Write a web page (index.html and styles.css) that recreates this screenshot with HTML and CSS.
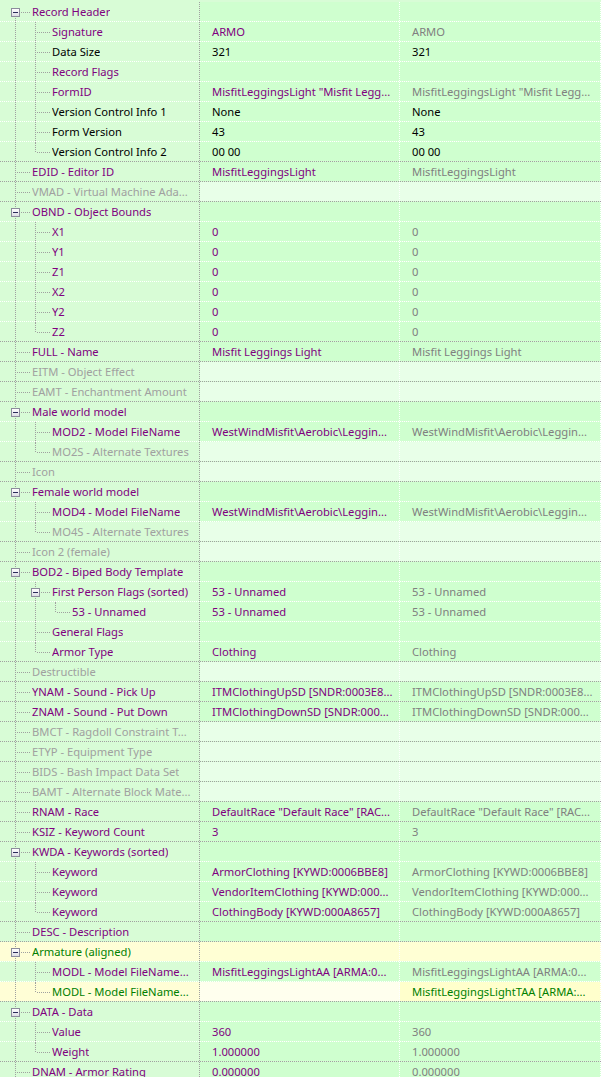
FILE: index.html
```html
<!DOCTYPE html>
<html>
<head>
<meta charset="utf-8">
<title>Record view</title>
<link rel="stylesheet" href="styles.css">
</head>
<body>
<div class="tree">
  <div class="row first"><div class="c name"><i class="g first"><b class="box"></b></i><span class="t">Record Header</span></div><div class="c val"></div><div class="c val v3"></div></div>
  <div class="row"><div class="c name"><i class="g pipe"></i><i class="g tee"></i><span class="t">Signature</span></div><div class="c val">ARMO</div><div class="c val v3">ARMO</div></div>
  <div class="row"><div class="c name bk"><i class="g pipe"></i><i class="g tee"></i><span class="t">Data Size</span></div><div class="c val bk">321</div><div class="c val v3 bk">321</div></div>
  <div class="row"><div class="c name"><i class="g pipe"></i><i class="g tee"></i><span class="t">Record Flags</span></div><div class="c val"></div><div class="c val v3"></div></div>
  <div class="row"><div class="c name"><i class="g pipe"></i><i class="g tee"></i><span class="t">FormID</span></div><div class="c val">MisfitLeggingsLight "Misfit Legg...</div><div class="c val v3">MisfitLeggingsLight "Misfit Legg...</div></div>
  <div class="row"><div class="c name bk"><i class="g pipe"></i><i class="g tee"></i><span class="t">Version Control Info 1</span></div><div class="c val bk">None</div><div class="c val v3 bk">None</div></div>
  <div class="row"><div class="c name bk"><i class="g pipe"></i><i class="g tee"></i><span class="t">Form Version</span></div><div class="c val bk">43</div><div class="c val v3 bk">43</div></div>
  <div class="row"><div class="c name bk"><i class="g pipe"></i><i class="g elbow"></i><span class="t">Version Control Info 2</span></div><div class="c val bk">00 00</div><div class="c val v3 bk">00 00</div></div>
  <div class="row l1"><div class="c name"><i class="g tee"></i><span class="t">EDID - Editor ID</span></div><div class="c val">MisfitLeggingsLight</div><div class="c val v3">MisfitLeggingsLight</div></div>
  <div class="row l1 off"><div class="c name dis"><i class="g tee"></i><span class="t">VMAD - Virtual Machine Ada...</span></div><div class="c val"></div><div class="c val v3"></div></div>
  <div class="row l1"><div class="c name"><i class="g tee"><b class="box"></b></i><span class="t">OBND - Object Bounds</span></div><div class="c val"></div><div class="c val v3"></div></div>
  <div class="row"><div class="c name"><i class="g pipe"></i><i class="g tee"></i><span class="t">X1</span></div><div class="c val">0</div><div class="c val v3">0</div></div>
  <div class="row"><div class="c name"><i class="g pipe"></i><i class="g tee"></i><span class="t">Y1</span></div><div class="c val">0</div><div class="c val v3">0</div></div>
  <div class="row"><div class="c name"><i class="g pipe"></i><i class="g tee"></i><span class="t">Z1</span></div><div class="c val">0</div><div class="c val v3">0</div></div>
  <div class="row"><div class="c name"><i class="g pipe"></i><i class="g tee"></i><span class="t">X2</span></div><div class="c val">0</div><div class="c val v3">0</div></div>
  <div class="row"><div class="c name"><i class="g pipe"></i><i class="g tee"></i><span class="t">Y2</span></div><div class="c val">0</div><div class="c val v3">0</div></div>
  <div class="row"><div class="c name"><i class="g pipe"></i><i class="g elbow"></i><span class="t">Z2</span></div><div class="c val">0</div><div class="c val v3">0</div></div>
  <div class="row l1"><div class="c name"><i class="g tee"></i><span class="t">FULL - Name</span></div><div class="c val">Misfit Leggings Light</div><div class="c val v3">Misfit Leggings Light</div></div>
  <div class="row l1 off"><div class="c name dis"><i class="g tee"></i><span class="t">EITM - Object Effect</span></div><div class="c val"></div><div class="c val v3"></div></div>
  <div class="row l1 off"><div class="c name dis"><i class="g tee"></i><span class="t">EAMT - Enchantment Amount</span></div><div class="c val"></div><div class="c val v3"></div></div>
  <div class="row l1"><div class="c name"><i class="g tee"><b class="box"></b></i><span class="t">Male world model</span></div><div class="c val"></div><div class="c val v3"></div></div>
  <div class="row"><div class="c name"><i class="g pipe"></i><i class="g tee"></i><span class="t">MOD2 - Model FileName</span></div><div class="c val">WestWindMisfit\Aerobic\Leggin...</div><div class="c val v3">WestWindMisfit\Aerobic\Leggin...</div></div>
  <div class="row off"><div class="c name dis"><i class="g pipe"></i><i class="g elbow"></i><span class="t">MO2S - Alternate Textures</span></div><div class="c val"></div><div class="c val v3"></div></div>
  <div class="row l1 off"><div class="c name dis"><i class="g tee"></i><span class="t">Icon</span></div><div class="c val"></div><div class="c val v3"></div></div>
  <div class="row l1"><div class="c name"><i class="g tee"><b class="box"></b></i><span class="t">Female world model</span></div><div class="c val"></div><div class="c val v3"></div></div>
  <div class="row"><div class="c name"><i class="g pipe"></i><i class="g tee"></i><span class="t">MOD4 - Model FileName</span></div><div class="c val">WestWindMisfit\Aerobic\Leggin...</div><div class="c val v3">WestWindMisfit\Aerobic\Leggin...</div></div>
  <div class="row off"><div class="c name dis"><i class="g pipe"></i><i class="g elbow"></i><span class="t">MO4S - Alternate Textures</span></div><div class="c val"></div><div class="c val v3"></div></div>
  <div class="row l1 off"><div class="c name dis"><i class="g tee"></i><span class="t">Icon 2 (female)</span></div><div class="c val"></div><div class="c val v3"></div></div>
  <div class="row l1"><div class="c name"><i class="g tee"><b class="box"></b></i><span class="t">BOD2 - Biped Body Template</span></div><div class="c val"></div><div class="c val v3"></div></div>
  <div class="row"><div class="c name"><i class="g pipe"></i><i class="g tee"><b class="box"></b></i><span class="t">First Person Flags (sorted)</span></div><div class="c val">53 - Unnamed</div><div class="c val v3">53 - Unnamed</div></div>
  <div class="row"><div class="c name"><i class="g pipe"></i><i class="g pipe"></i><i class="g elbow"></i><span class="t">53 - Unnamed</span></div><div class="c val">53 - Unnamed</div><div class="c val v3">53 - Unnamed</div></div>
  <div class="row"><div class="c name"><i class="g pipe"></i><i class="g tee"></i><span class="t">General Flags</span></div><div class="c val"></div><div class="c val v3"></div></div>
  <div class="row"><div class="c name"><i class="g pipe"></i><i class="g elbow"></i><span class="t">Armor Type</span></div><div class="c val">Clothing</div><div class="c val v3">Clothing</div></div>
  <div class="row l1 off"><div class="c name dis"><i class="g tee"></i><span class="t">Destructible</span></div><div class="c val"></div><div class="c val v3"></div></div>
  <div class="row l1"><div class="c name"><i class="g tee"></i><span class="t">YNAM - Sound - Pick Up</span></div><div class="c val">ITMClothingUpSD [SNDR:0003E8...</div><div class="c val v3">ITMClothingUpSD [SNDR:0003E8...</div></div>
  <div class="row l1"><div class="c name"><i class="g tee"></i><span class="t">ZNAM - Sound - Put Down</span></div><div class="c val">ITMClothingDownSD [SNDR:000...</div><div class="c val v3">ITMClothingDownSD [SNDR:000...</div></div>
  <div class="row l1 off"><div class="c name dis"><i class="g tee"></i><span class="t">BMCT - Ragdoll Constraint T...</span></div><div class="c val"></div><div class="c val v3"></div></div>
  <div class="row l1 off"><div class="c name dis"><i class="g tee"></i><span class="t">ETYP - Equipment Type</span></div><div class="c val"></div><div class="c val v3"></div></div>
  <div class="row l1 off"><div class="c name dis"><i class="g tee"></i><span class="t">BIDS - Bash Impact Data Set</span></div><div class="c val"></div><div class="c val v3"></div></div>
  <div class="row l1 off"><div class="c name dis"><i class="g tee"></i><span class="t">BAMT - Alternate Block Mate...</span></div><div class="c val"></div><div class="c val v3"></div></div>
  <div class="row l1"><div class="c name"><i class="g tee"></i><span class="t">RNAM - Race</span></div><div class="c val">DefaultRace "Default Race" [RAC...</div><div class="c val v3">DefaultRace "Default Race" [RAC...</div></div>
  <div class="row l1"><div class="c name"><i class="g tee"></i><span class="t">KSIZ - Keyword Count</span></div><div class="c val">3</div><div class="c val v3">3</div></div>
  <div class="row l1"><div class="c name"><i class="g tee"><b class="box"></b></i><span class="t">KWDA - Keywords (sorted)</span></div><div class="c val"></div><div class="c val v3"></div></div>
  <div class="row"><div class="c name"><i class="g pipe"></i><i class="g tee"></i><span class="t">Keyword</span></div><div class="c val">ArmorClothing [KYWD:0006BBE8]</div><div class="c val v3">ArmorClothing [KYWD:0006BBE8]</div></div>
  <div class="row"><div class="c name"><i class="g pipe"></i><i class="g tee"></i><span class="t">Keyword</span></div><div class="c val">VendorItemClothing [KYWD:000...</div><div class="c val v3">VendorItemClothing [KYWD:000...</div></div>
  <div class="row"><div class="c name"><i class="g pipe"></i><i class="g elbow"></i><span class="t">Keyword</span></div><div class="c val">ClothingBody [KYWD:000A8657]</div><div class="c val v3">ClothingBody [KYWD:000A8657]</div></div>
  <div class="row l1"><div class="c name"><i class="g tee"></i><span class="t">DESC - Description</span></div><div class="c val"></div><div class="c val v3"></div></div>
  <div class="row l1 yel"><div class="c name gr"><i class="g tee"><b class="box"></b></i><span class="t">Armature (aligned)</span></div><div class="c val"></div><div class="c val v3"></div></div>
  <div class="row"><div class="c name"><i class="g pipe"></i><i class="g tee"></i><span class="t">MODL - Model FileName...</span></div><div class="c val">MisfitLeggingsLightAA [ARMA:0...</div><div class="c val v3">MisfitLeggingsLightAA [ARMA:0...</div></div>
  <div class="row yel2"><div class="c name gr"><i class="g pipe"></i><i class="g elbow"></i><span class="t">MODL - Model FileName...</span></div><div class="c val"></div><div class="c val v3 gr">MisfitLeggingsLightTAA [ARMA:...</div></div>
  <div class="row l1"><div class="c name"><i class="g tee"><b class="box"></b></i><span class="t">DATA - Data</span></div><div class="c val"></div><div class="c val v3"></div></div>
  <div class="row"><div class="c name"><i class="g pipe"></i><i class="g tee"></i><span class="t">Value</span></div><div class="c val">360</div><div class="c val v3">360</div></div>
  <div class="row"><div class="c name"><i class="g pipe"></i><i class="g elbow"></i><span class="t">Weight</span></div><div class="c val">1.000000</div><div class="c val v3">1.000000</div></div>
  <div class="row l1"><div class="c name"><i class="g tee"></i><span class="t">DNAM - Armor Rating</span></div><div class="c val">0.000000</div><div class="c val v3">0.000000</div></div>
</div>
</body>
</html>
```

FILE: styles.css
```css
html, body {
  margin: 0;
  padding: 0;
}
body {
  background: #d8fcd6;
  font-family: "Noto Sans", "Open Sans", sans-serif;
  font-size: 11.2px;
  color: #800080;
}
.tree {
  width: 601px;
  padding-top: 1px;
}
.row {
  display: flex;
  height: 19px;
  border-top: 1px dotted #ffffff;
}
.row.l1 {
  border-top-color: #a0a0a0;
}
.row.first {
  border-top-color: transparent;
}
.c {
  box-sizing: border-box;
  height: 19px;
  line-height: 19px;
  white-space: nowrap;
  overflow: hidden;
  flex: none;
}
.name {
  width: 200px;
  padding-left: 5px;
  display: flex;
  background: #d8fcd6;
  border-right: 1px dotted #a0a0a0;
}
.val {
  width: 200px;
  padding-left: 12px;
  background: #cfffcf;
  border-right: 1px dotted #ffffff;
}
.v3 {
  color: #808080;
  width: 201px;
}
.off .val {
  background: #e8ffe8;
}
.yel .name,
.yel2 .name {
  background: #fffed6;
}
.yel .val {
  background: #ffffd4;
}
.yel2 .val {
  background: #ffffee;
}
.yel2 .v3 {
  background: #ffffcc;
}
.bk { color: #000000; }
.dis { color: #a0a0a0; }
.gr { color: #008000; }
.v3.bk { color: #000000; }
.v3.gr { color: #008000; }

.t {
  margin-left: 7px;
  overflow: hidden;
}
.g {
  position: relative;
  display: block;
  width: 20px;
  height: 19px;
  flex: none;
}
.g::before {
  content: "";
  position: absolute;
  left: 10px;
  top: 0;
  height: 19px;
  border-left: 1px dotted #a0a0a0;
}
.g.elbow::before {
  height: 10px;
}
.g.first::before {
  top: 10px;
  height: 9px;
}
.g.tee::after,
.g.elbow::after,
.g.first::after {
  content: "";
  position: absolute;
  left: 12px;
  top: 10px;
  width: 13px;
  border-top: 1px dotted #a0a0a0;
}
.box {
  position: absolute;
  z-index: 2;
  left: 6px;
  top: 6px;
  width: 9px;
  height: 9px;
  box-sizing: border-box;
  border: 1px solid #8c8c9c;
  background: linear-gradient(#ffffff, #dcdce4);
}
.box::after {
  content: "";
  position: absolute;
  left: 1px;
  top: 3px;
  width: 5px;
  height: 1px;
  background: #2a2a5a;
}
```
